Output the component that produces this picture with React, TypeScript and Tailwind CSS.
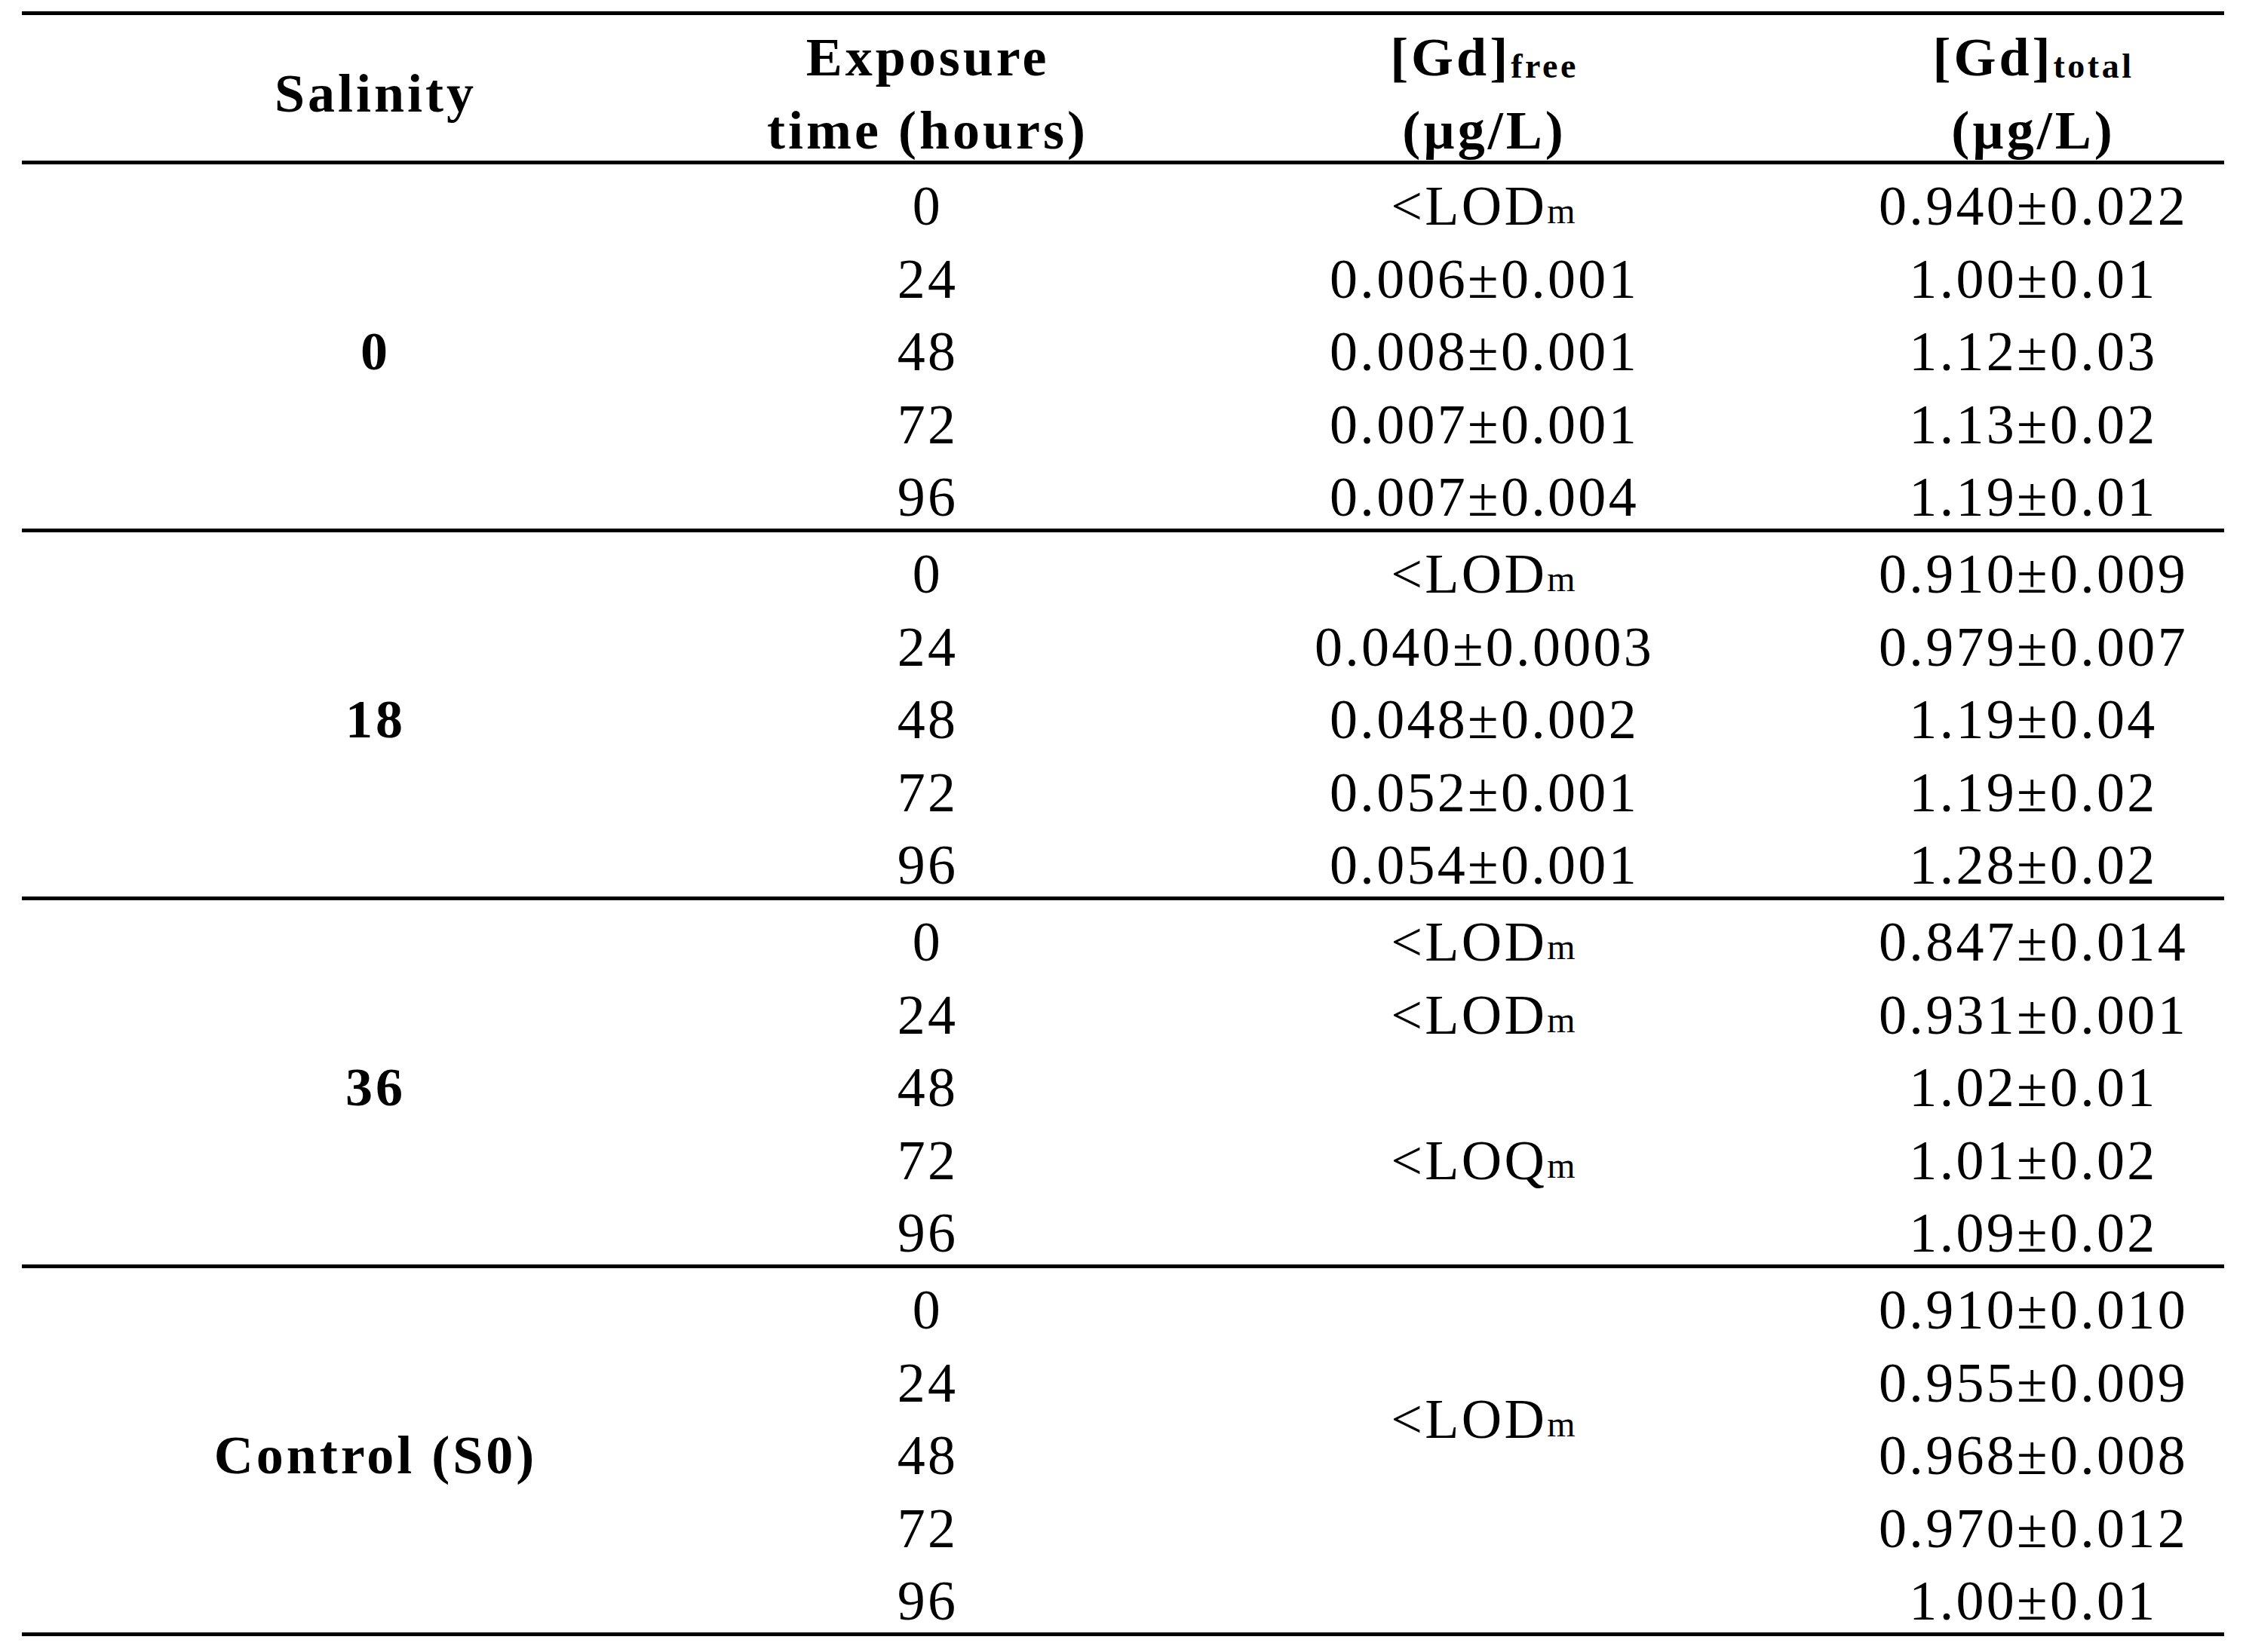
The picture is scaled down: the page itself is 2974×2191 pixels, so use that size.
import type { ReactNode } from 'react'

type FreeCell = { content: ReactNode; start: 1 | 2 | 3 | 4 | 5; span: 1 | 3 | 4 | 5 }

interface Group {
  label: string
  free: FreeCell[]
  total: string[]
}

const TIMES = ['0', '24', '48', '72', '96']

const ROW_START: Record<number, string> = {
  1: 'row-start-1',
  2: 'row-start-2',
  3: 'row-start-3',
  4: 'row-start-4',
  5: 'row-start-5',
}

const ROW_SPAN: Record<number, string> = {
  1: 'row-span-1',
  3: 'row-span-3',
  4: 'row-span-4',
  5: 'row-span-5',
}

function Limit({ kind }: { kind: 'LOD' | 'LOQ' }) {
  return (
    <>
      &lt;{kind}
      <span className="relative top-[7px] text-[48px] leading-none">m</span>
    </>
  )
}

const GROUPS: Group[] = [
  {
    label: '0',
    free: [
      { content: <Limit kind="LOD" />, start: 1, span: 1 },
      { content: '0.006±0.001', start: 2, span: 1 },
      { content: '0.008±0.001', start: 3, span: 1 },
      { content: '0.007±0.001', start: 4, span: 1 },
      { content: '0.007±0.004', start: 5, span: 1 },
    ],
    total: ['0.940±0.022', '1.00±0.01', '1.12±0.03', '1.13±0.02', '1.19±0.01'],
  },
  {
    label: '18',
    free: [
      { content: <Limit kind="LOD" />, start: 1, span: 1 },
      { content: '0.040±0.0003', start: 2, span: 1 },
      { content: '0.048±0.002', start: 3, span: 1 },
      { content: '0.052±0.001', start: 4, span: 1 },
      { content: '0.054±0.001', start: 5, span: 1 },
    ],
    total: ['0.910±0.009', '0.979±0.007', '1.19±0.04', '1.19±0.02', '1.28±0.02'],
  },
  {
    label: '36',
    free: [
      { content: <Limit kind="LOD" />, start: 1, span: 1 },
      { content: <Limit kind="LOD" />, start: 2, span: 1 },
      { content: <Limit kind="LOQ" />, start: 3, span: 3 },
    ],
    total: ['0.847±0.014', '0.931±0.001', '1.02±0.01', '1.01±0.02', '1.09±0.02'],
  },
  {
    label: 'Control (S0)',
    free: [{ content: <Limit kind="LOD" />, start: 1, span: 4 }],
    total: ['0.910±0.010', '0.955±0.009', '0.968±0.008', '0.970±0.012', '1.00±0.01'],
  },
]

const COLS = 'grid-cols-[938px_526px_950px_506px]'

function Rule() {
  return <div className="h-[5px] bg-black" />
}

function HeadCell({ children }: { children: ReactNode }) {
  return (
    <div className="flex min-h-0 flex-col items-center justify-center pt-[16px] text-center whitespace-nowrap">
      {children}
    </div>
  )
}

function Sub({ children }: { children: ReactNode }) {
  return <span className="relative top-[3px] text-[46px] leading-none tracking-[3.5px]">{children}</span>
}

function Cell({ children, className = '' }: { children: ReactNode; className?: string }) {
  return (
    <div className={`flex items-center justify-center pt-[14px] text-center leading-[82.6px] whitespace-nowrap ${className}`}>
      {children}
    </div>
  )
}

function GroupRows({ group }: { group: Group }) {
  return (
    <div className={`grid ${COLS} grid-rows-[repeat(5,96.6px)] text-[74px] tracking-[3.3px]`}>
      <Cell className="col-start-1 row-span-5 row-start-1 text-[72px] font-bold tracking-[4px]">{group.label}</Cell>
      {TIMES.map((t, i) => (
        <Cell key={t} className={`col-start-2 ${ROW_START[i + 1]}`}>
          {t}
        </Cell>
      ))}
      {group.free.map((f) => (
        <Cell key={f.start} className={`col-start-3 ${ROW_START[f.start]} ${ROW_SPAN[f.span]}`}>
          {f.content}
        </Cell>
      ))}
      {group.total.map((v, i) => (
        <Cell key={i} className={`col-start-4 ${ROW_START[i + 1]}`}>
          {v}
        </Cell>
      ))}
    </div>
  )
}

export default function App() {
  return (
    <div className="min-h-screen bg-white pl-[29px] pt-[15px] font-[family-name:Liberation_Serif,Times_New_Roman,serif] text-black">
      <div className="w-[2920px]">
        <Rule />
        <div className={`grid h-[193px] grid-rows-[193px] ${COLS} text-[72px] font-bold leading-[97px] tracking-[4px]`}>
          <HeadCell>Salinity</HeadCell>
          <HeadCell>
            <span>Exposure</span>
            <span>time (hours)</span>
          </HeadCell>
          <HeadCell>
            <span>
              [Gd]<Sub>free</Sub>
            </span>
            <span>(µg/L)</span>
          </HeadCell>
          <HeadCell>
            <span>
              [Gd]<Sub>total</Sub>
            </span>
            <span>(µg/L)</span>
          </HeadCell>
        </div>
        <Rule />
        {GROUPS.map((g) => (
          <div key={g.label}>
            <GroupRows group={g} />
            <Rule />
          </div>
        ))}
      </div>
    </div>
  )
}
